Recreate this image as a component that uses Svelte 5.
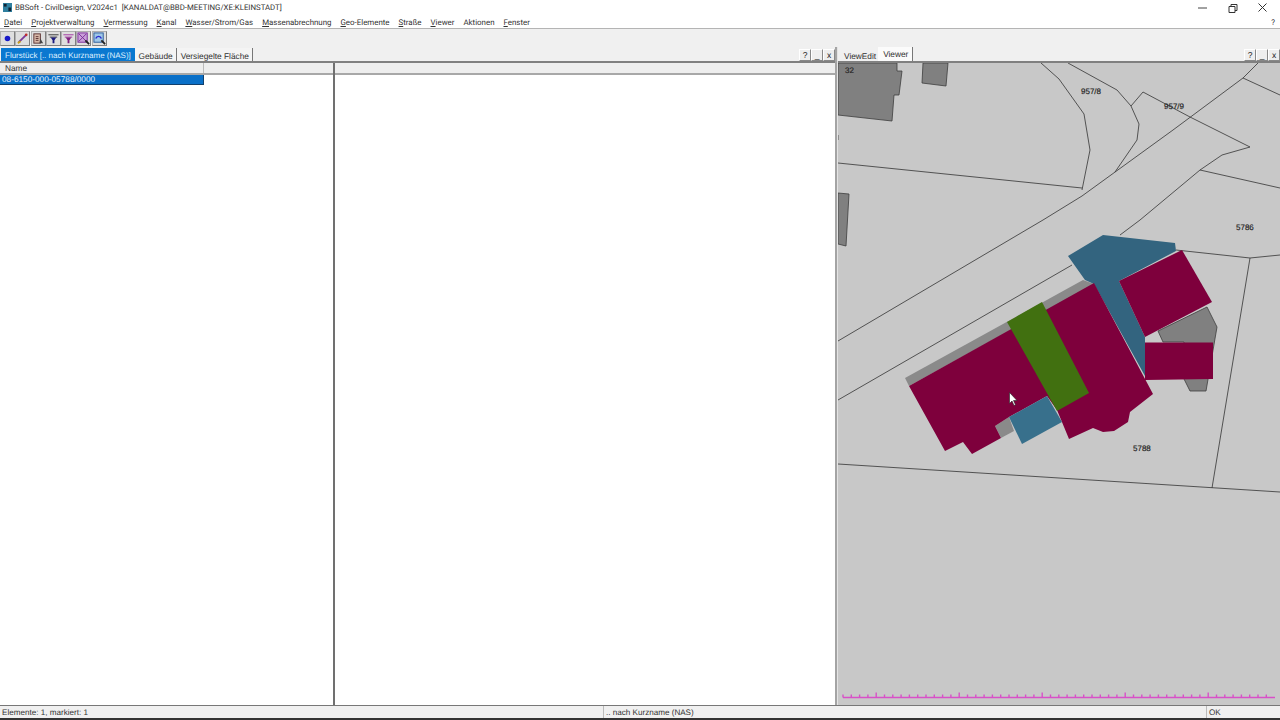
<script>
	const menu = [
		['D', 'atei'],
		['', 'Projektverwaltung', 'P'],
		['V', 'ermessung'],
		['K', 'anal'],
		['W', 'asser/Strom/Gas'],
		['M', 'assenabrechnung'],
		['G', 'eo-Elemente'],
		['S', 'traße'],
		['V', 'iewer'],
		['', 'Aktionen'],
		['F', 'enster']
	];
	const tabs = ['Gebäude', 'Versiegelte Fläche'];

	// ruler ticks along the bottom of the viewer
	const ticks = [];
	for (let i = 0; i < 52; i++) {
		const x = 843 + i * 8.3;
		ticks.push({ x, major: (i - 4) % 10 === 0 });
	}

	const lines = [
		'838,341 1043,220 1082,196 1173,130 1243,78 1258,63',
		'838,400 1072,265',
		'1120,235 1140,220 1200,170 1222,155 1250,147 1190,117 1143,92 1131,106',
		'1068,63 1117,90 1131,106 1139,124 1137,140 1115,172',
		'1041,63 1059,79 1084,114 1090,150 1082,190',
		'838,163 1082,188',
		'1243,78 1280,95',
		'1200,170 1280,188',
		'1176,250 1250,258 1280,255',
		'1250,258 1212,488',
		'838,464 1280,492'
	];
	const buildings = [
		'838,63 897,63 897,71 902,71 899,95 894,95 892,121 838,115',
		'923,63 948,63 946,86 922,83',
		'838,193 849,194 846,246 838,244',
		'1158,331 1207,307 1217,327 1206,391 1190,391 1184,379 1184,342 1163,342'
	];
</script>

<div class="window">
	<div class="titlebar">
		<svg class="appicon" viewBox="0 0 10 10">
			<rect width="10" height="10" fill="#2f7f9f" />
			<rect x="1" y="1" width="3" height="3" fill="#123" />
			<rect x="6" y="5" width="3" height="4" fill="#123" />
		</svg>
		<span class="title">BBSoft - CivilDesign, V2024c1&nbsp; [KANALDAT@BBD-MEETING/XE:KLEINSTADT]</span>
		<div class="winctl">
			<svg viewBox="0 0 30 14"><path d="M10 7h9" stroke="#444" /></svg>
			<svg viewBox="0 0 30 14"><path d="M11 5.500h6v6h-6zM13 5.500v-2h6v6h-2" fill="none" stroke="#333" /></svg>
			<svg viewBox="0 0 30 14"><path d="M10.500 2.500l8 8M18.500 2.500l-8 8" fill="none" stroke="#333" /></svg>
		</div>
	</div>

	<div class="menubar">
		{#each menu as m}
			<span class="menuitem">
				{#if m[2]}<u>{m[2]}</u>{m[1].slice(1)}{:else}<u>{m[0]}</u>{m[1]}{/if}
			</span>
		{/each}
		<span class="menuhelp">?</span>
	</div>

	<div class="toolbar">
		<span class="tool"><svg viewBox="0 0 14 14"><circle cx="7" cy="7" r="3" fill="#1a1ac8" /></svg></span>
		<span class="tool"><svg viewBox="0 0 14 14"><path d="M3 11l8-8" stroke="#7a3a9a" stroke-width="2" /><path d="M2 12l3-2" stroke="#c8a020" stroke-width="2" /><circle cx="11" cy="3" r="1.500" fill="#c03030" /></svg></span>
		<span class="tool"><svg viewBox="0 0 14 14"><rect x="2" y="2" width="7" height="10" fill="#d8b8a8" stroke="#5a3030" /><path d="M4 5h3M4 7h3M4 9h3" stroke="#5a3030" /><path d="M9 7l3 5h-4z" fill="#444" /></svg></span>
		<span class="tool"><svg viewBox="0 0 14 14"><path d="M1.500 3h11M3 5.500h8" stroke="#333" /><path d="M4 6h6l-2 3v3h-2v-3z" fill="#1a1a80" /></svg></span>
		<span class="tool"><svg viewBox="0 0 14 14"><path d="M1.500 3h11M3 5.500h8" stroke="#a030a0" /><path d="M4 6h6l-2 3v3h-2v-3z" fill="#802080" /></svg></span>
		<span class="tool"><svg viewBox="0 0 14 14"><rect x="1" y="1" width="10" height="10" fill="#c8a0d8" stroke="#7a2a9a" /><path d="M2 2l8 8M10 2l-8 8" stroke="#7a2a9a" /><path d="M9 9l4 4" stroke="#222" stroke-width="2" /></svg></span>
		<span class="tool"><svg viewBox="0 0 14 14"><rect x="1" y="1" width="10" height="10" fill="#a0c8e8" stroke="#2a5a9a" /><path d="M3 7c1-3 5-3 6 0" fill="none" stroke="#2a2ad0" stroke-width="1.500" /><path d="M9 9l4 4" stroke="#222" stroke-width="2" /></svg></span>
	</div>

	<div class="main">
		<section class="leftpane">
			<div class="tabrow">
				<span class="tab active">Flurstück [.. nach Kurzname (NAS)]</span>
				{#each tabs as t}
					<span class="tab">{t}</span>
				{/each}
				<div class="panebtns">
					<span class="pbtn">?</span><span class="pbtn">_</span><span class="pbtn">x</span>
				</div>
			</div>
			<div class="tablearea">
				<div class="listcol">
					<div class="header">
						<span class="hcell first">Name</span>
						<span class="hcell second"></span>
					</div>
					<div class="row">08-6150-000-05788/0000</div>
				</div>
				<div class="detailcol">
					<div class="header"></div>
				</div>
			</div>
		</section>

		<section class="rightpane">
			<div class="tabrow">
				<span class="vtab">ViewEdit</span>
				<span class="vtab current">Viewer</span>
				<div class="panebtns">
					<span class="pbtn">?</span><span class="pbtn">_</span><span class="pbtn">x</span>
				</div>
			</div>
			<div class="mapwrap">
				<svg class="map" viewBox="838 63 442 642">
					{#each buildings as b}
						<polygon points={b} fill="#808080" stroke="#3e3e3e" stroke-width="0.800" />
					{/each}
					{#each lines as l}
						<polyline points={l} fill="none" stroke="#333" stroke-width="0.800" />
					{/each}
					<path d="M838 135v5" stroke="#555" />

					<polygon points="905,378 1083,280 1094,284 909,386" fill="#8a8a8a" />
					<polygon points="995,426 1009,417 1014,431 1001,438" fill="#8a8a8a" />
					<polygon points="1068,256 1103,235 1175,243 1176,251 1119,281 1145,337 1145,376 1094,284 1085,280" fill="#33647f" />
					<polygon points="909,386 1094,283 1153,394 1130,412 1128,422 1114,431 1103,432 1093,428 1069,439 1057,410 1047,396 1009,417 995,426 1001,438 972,454 963,442 945,451" fill="#7e003c" />
					<polygon points="1119,281 1182,250 1212,302 1145,337" fill="#7e003c" />
					<polygon points="1145,342.500 1213,342.500 1213,379 1145,380" fill="#7e003c" />
					<polygon points="1007,322 1042,302 1089,393 1057,411" fill="#417010" />
					<polygon points="1009,417 1047,396 1062,422 1022,444" fill="#38708c" />

					<g class="labels">
						<text x="845" y="73">32</text>
						<text x="1081" y="94">957/8</text>
						<text x="1164" y="109">957/9</text>
						<text x="1236" y="230">5786</text>
						<text x="1133" y="451">5788</text>
					</g>

					<path d="M1009.500 392.500v11l2.500-2.500 2 4.500 1.500-.7-2-4.300h3.500z" fill="#fff" stroke="#222" stroke-width="0.600" />

					<g class="ruler">
						<path d="M843 697.500H1275" />
						{#each ticks as t}
							<path d="M{t.x} 697.500v{t.major ? -5 : -3}" />
						{/each}
					</g>
				</svg>
			</div>
		</section>
	</div>

	<div class="statusbar">
		<span class="scell">Elemente: 1, markiert: 1</span>
		<span class="scell">.. nach Kurzname (NAS)</span>
		<span class="scell ok">OK</span>
	</div>
</div>

<style>
	:global(body) {
		margin: 0;
		background: #fff;
	}
	.window {
		width: 1280px;
		height: 720px;
		display: flex;
		flex-direction: column;
		overflow: hidden;
		font-family: "Liberation Sans", Arial, sans-serif;
		color: #222;
		border-bottom: 2px solid #333;
		box-sizing: border-box;
		text-rendering: geometricPrecision;
	}
	.titlebar {
		height: 15px;
		display: flex;
		align-items: center;
		padding-left: 3px;
		font-family: Roboto, sans-serif;
		font-size: 7.800px;
		color: #333;
	}
	.appicon {
		width: 9px;
		height: 9px;
		margin-right: 3px;
	}
	.winctl {
		margin-left: auto;
		display: flex;
		margin-right: 2px;
	}
	.winctl svg {
		width: 30px;
		height: 14px;
	}
	.menubar {
		height: 13px;
		display: flex;
		align-items: center;
		gap: 9px;
		padding: 1px 0 0 4px;
		box-sizing: border-box;
		font-family: Roboto, sans-serif;
		font-size: 7.900px;
		color: #333;
	}
	.menuhelp {
		margin-left: auto;
		margin-right: 5px;
	}
	.toolbar {
		height: 19px;
		display: flex;
		align-items: center;
		gap: 0.300px;
		background: #f0f0f0;
		border-top: 1px solid #b4b4b4;
		box-sizing: border-box;
	}
	.tool {
		width: 15px;
		height: 15px;
		box-sizing: border-box;
		display: block;
		border: 1px solid #b0b0b0;
		border-right-color: #808080;
		border-bottom-color: #808080;
		background: #dedede;
	}
	.tool svg {
		display: block;
		width: 13px;
		height: 13px;
	}
	.main {
		flex: 1;
		display: flex;
		min-height: 0;
		background: #f0f0f0;
	}
	.leftpane {
		width: 835px;
		display: flex;
		flex-direction: column;
	}
	.rightpane {
		width: 442px;
		margin-left: 3px;
		display: flex;
		flex-direction: column;
		box-shadow: -1px 0 0 #e4e4e4, -3px 0 0 #a4a4a4;
	}
	.tabrow {
		height: 16px;
		box-sizing: border-box;
		background: #f0f0f0;
		border-bottom: 2px solid #808080;
		display: flex;
		align-items: flex-end;
		font-size: 8.300px;
		padding-left: 1px;
	}
	.tab {
		height: 13px;
		line-height: 17px;
		padding: 0 3.500px;
		box-sizing: border-box;
		border-right: 1px solid #777;
		color: #333;
		background: #f4f4f4;
		overflow: hidden;
	}
	.tab.active {
		background: #0a78d0;
		color: #dff0ff;
		font-size: 8px;
		width: 134px;
		line-height: 15px;
		padding: 0 0 0 4px;
		white-space: nowrap;
		border-right: 0;
	}
	.vtab {
		height: 12px;
		line-height: 14px;
		padding: 0 2px 0 5px;
		color: #333;
	}
	.vtab.current {
		height: 14px;
		line-height: 15px;
		padding: 0 4px 0 5px;
		background: #fbfbfb;
		border-right: 1px solid #777;
	}
	.panebtns {
		margin-left: auto;
		display: flex;
		align-self: flex-start;
		margin-top: 2px;
	}
	.pbtn {
		width: 12px;
		height: 12px;
		box-sizing: border-box;
		line-height: 10px;
		text-align: center;
		font-size: 8.500px;
		background: #eee;
		border: 1px solid;
		border-color: #fff #888 #888 #fff;
	}
	.tablearea {
		flex: 1;
		display: flex;
		min-height: 0;
	}
	.listcol {
		width: 335px;
		box-sizing: border-box;
		border-right: 2px solid #707070;
		background: #fff;
	}
	.detailcol {
		flex: 1;
		background: #fff;
	}
	.header {
		height: 12px;
		box-sizing: border-box;
		display: flex;
		background: #eee;
		border-bottom: 2px solid #a8a8a8;
	}
	.hcell {
		font-size: 8.300px;
		line-height: 10px;
		color: #333;
		box-sizing: border-box;
	}
	.hcell.first {
		width: 204px;
		padding-left: 5px;
		border-right: 1px solid #bbb;
	}
	.hcell.second {
		flex: 1;
	}
	.row {
		width: 204px;
		height: 10px;
		box-sizing: border-box;
		line-height: 10px;
		font-size: 8.250px;
		padding-left: 2px;
		color: #e8f4ff;
		background: #0a70c8;
		border: 1px solid #12406c;
		border-width: 0 1px 1px 0;
	}
	.mapwrap {
		flex: 1;
		min-height: 0;
		background: #c8c8c8;
	}
	.map {
		display: block;
		width: 442px;
		height: 642px;
	}
	.ruler path {
		stroke: #d850c8;
		stroke-width: 1.400px;
		fill: none;
	}
	.labels text {
		font-family: "Liberation Sans", Arial, sans-serif;
		font-size: 8px;
		fill: #222;
		stroke: #222;
		stroke-width: 0.150px;
	}
	.statusbar {
		height: 13px;
		background: #f0f0f0;
		display: grid;
		grid-template-columns: 604px 603px 1fr;
		font-size: 8.100px;
		line-height: 13px;
		color: #333;
		border-top: 1px solid #777;
		box-sizing: border-box;
	}
	.scell {
		padding-left: 2px;
		border-right: 1px solid #bbb;
		white-space: nowrap;
		overflow: hidden;
	}
	.scell.ok {
		border-right: 0;
	}
</style>
